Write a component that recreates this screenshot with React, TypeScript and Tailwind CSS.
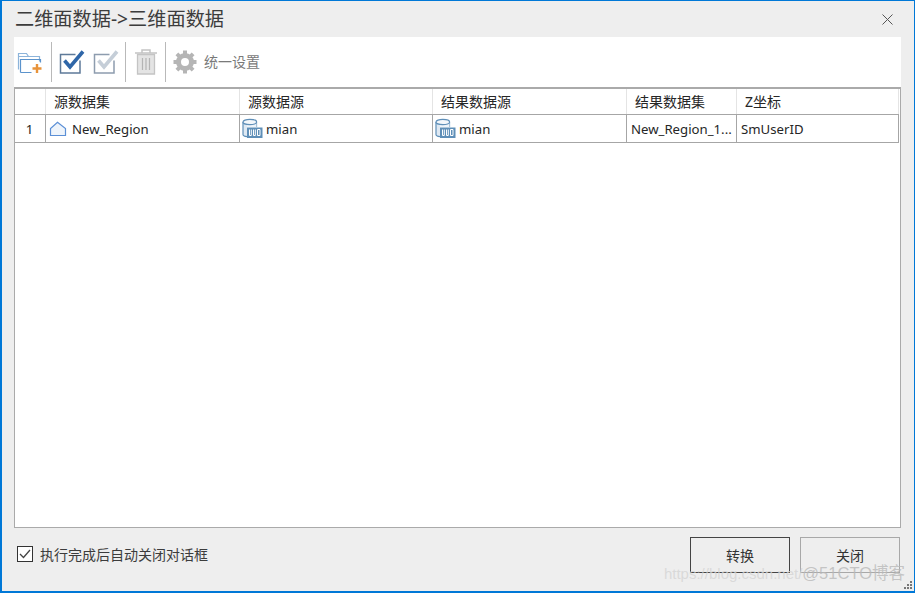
const FONT = "font-['Noto_Sans','Noto_Sans_CJK_SC',sans-serif]";

const columns = [
  { title: "源数据集", width: "w-[194px]" },
  { title: "源数据源", width: "w-[193px]" },
  { title: "结果数据源", width: "w-[194px]" },
  { title: "结果数据集", width: "w-[110px]" },
  { title: "Z坐标", width: "flex-1" },
];

function FolderAddIcon() {
  return (
    <svg width="26" height="26" viewBox="0 0 26 26" fill="none">
      <path d="M1.500 20.500V4.500h8l2 3h11v5M1.500 7.500h10" stroke="#8db4da" strokeWidth="1.200" />
      <path d="M3.500 23.500V10.500h20v3M3.500 23.500h11" stroke="#5b93cc" strokeWidth="1.200" />
      <path d="M20 15v9M15.500 19.500h9" stroke="#e8933a" strokeWidth="2.400" />
    </svg>
  );
}

function CheckBoxIcon({ frame, tick }: { frame: string; tick: string }) {
  return (
    <svg width="26" height="26" viewBox="0 0 26 26" fill="none">
      <path d="M21 11.500V24H1.500V5.500h15" stroke={frame} strokeWidth="1.500" />
      <path d="M5.500 11.500l5.500 6.500L24 2.500" stroke={tick} strokeWidth="3.600" />
    </svg>
  );
}

function TrashIcon() {
  return (
    <svg width="24" height="28" viewBox="0 0 24 28" fill="none">
      <path d="M1 5h22M8 4.500V2h8v2.500" stroke="#c4c4c4" strokeWidth="1.500" />
      <path d="M3.500 6.500h17V26h-17z" fill="#e4e4e4" stroke="#c4c4c4" strokeWidth="1.300" />
      <path d="M8.500 10v12M12 10v12M15.500 10v12" stroke="#b4b4b4" strokeWidth="1.200" />
    </svg>
  );
}

function GearIcon() {
  return (
    <svg width="24" height="24" viewBox="0 0 24 24" fill="none">
      <circle cx="12" cy="12" r="6.500" stroke="#b5b5b5" strokeWidth="5" />
      <path
        d="M12 .5v5M12 18.500v5M.5 12h5M18.500 12h5M3.900 3.900l3.500 3.500M16.600 16.600l3.500 3.500M3.900 20.100l3.500-3.500M16.600 7.400l3.500-3.500"
        stroke="#b5b5b5"
        strokeWidth="4"
      />
    </svg>
  );
}

function RegionIcon() {
  return (
    <svg width="18" height="16" viewBox="0 0 18 16" fill="none">
      <path d="M1.500 14.500V7.500L8.500 1.200 16.500 7.500v7z" fill="#eef4fb" stroke="#5b8fd6" strokeWidth="1.200" />
    </svg>
  );
}

function DatasourceIcon() {
  return (
    <svg width="21" height="21" viewBox="0 0 21 21" fill="none">
      <path d="M1 4v12.500c0 1.200 2 2 4 2.200V4z" fill="#dfe9f3" />
      <path d="M1 4v12.500c0 1.200 2 2 4 2.200M14.500 4v5" stroke="#5f8fb8" strokeWidth="1.200" />
      <path d="M5 4h9.500v5H5z" fill="#eef4fa" />
      <ellipse cx="7.800" cy="4" rx="6.800" ry="2.700" fill="#f3f7fb" stroke="#5f8fb8" strokeWidth="1.200" />
      <rect x="5" y="9.500" width="15.500" height="10.500" fill="#5f8fb8" />
      <path d="M7.500 11.500v6h1.800v-6M11.500 11.500v6h1.800v-6M15.500 11.500v6h2.500v-6z" stroke="#ffffff" strokeWidth="1" />
    </svg>
  );
}

function ToolbarDivider({ className }: { className: string }) {
  return <div className={`h-10 w-px bg-[#b9b9b9] ${className}`} />;
}

function Cell({ width, children, className = "" }: { width: string; children: React.ReactNode; className?: string }) {
  return <div className={`${width} flex h-full items-center truncate border-r border-[#a6a6a6] ${className}`}>{children}</div>;
}

export default function App() {
  return (
    <div className={`${FONT} relative flex h-[593px] w-[915px] flex-col overflow-hidden border-t border-r border-b-2 border-l-2 border-[#0078d7] bg-[#eeeeee] text-[#262626]`}>
      {/* Title bar */}
      <div className="flex h-9 shrink-0 items-center justify-between pr-[21px] pl-[13px]">
        <span className="text-[19.200px] leading-none text-[#3c3c3c]">二维面数据-&gt;三维面数据</span>
        <svg width="11" height="11" viewBox="0 0 11 11" fill="none">
          <path d="M.5.500l10 10M10.500.500l-10 10" stroke="#555555" strokeWidth="1" />
        </svg>
      </div>

      {/* Toolbar */}
      <div className="mr-[13px] ml-3 flex h-[50px] shrink-0 items-center bg-white pl-[3px]">
        <FolderAddIcon />
        <ToolbarDivider className="mr-[7px] ml-2" />
        <CheckBoxIcon frame="#5e7a99" tick="#2f66a8" />
        <div className="ml-2"><CheckBoxIcon frame="#8d9cae" tick="#c5ced8" /></div>
        <ToolbarDivider className="mr-2 ml-[6px]" />
        <TrashIcon />
        <ToolbarDivider className="mr-[7px] ml-[7px]" />
        <GearIcon />
        <span className="mb-[2px] ml-[7px] text-[14px] text-[#7a7a7a]">统一设置</span>
      </div>

      {/* Grid */}
      <div className="mr-[13px] ml-3 flex min-h-0 flex-1 flex-col border border-t-2 border-[#aaaaaa] bg-white pr-px text-[14px]">
        <div className="flex h-[26px] shrink-0 items-center border-b border-[#a6a6a6]">
          <div className="h-full w-[31px] shrink-0 border-r border-[#e4e4e4]" />
          {columns.map((col) => (
            <div key={col.title} className={`${col.width} flex h-full items-center border-r border-[#e4e4e4] pl-2`}>
              {col.title}
            </div>
          ))}
        </div>
        <div className="flex h-[28px] shrink-0 items-center border-b border-[#a6a6a6] text-[13.200px]">
          <Cell width="w-[31px] shrink-0" className="justify-center pt-[2px] pr-[1px]">1</Cell>
          <Cell width="w-[194px]" className="gap-[5px] pl-[3px]"><RegionIcon /><span className="mt-[2px]">New_Region</span></Cell>
          <Cell width="w-[193px]" className="gap-[3px] pl-[2px]"><DatasourceIcon /><span className="mt-[2px]">mian</span></Cell>
          <Cell width="w-[194px]" className="gap-[3px] pl-[2px]"><DatasourceIcon /><span className="mt-[2px]">mian</span></Cell>
          <Cell width="w-[110px]" className="pt-[2px] pl-1">New_Region_1...</Cell>
          <Cell width="flex-1" className="pt-[2px] pl-1">SmUserID</Cell>
        </div>
      </div>

      {/* Footer */}
      <div className="mr-[14px] ml-[15px] flex h-[63px] shrink-0 items-start justify-between pt-[9px]">
        <label className="flex h-9 items-center gap-[7px] pb-[2px] text-[14px] text-[#3c3c3c]">
          <span className="flex h-4 w-4 items-center justify-center border border-[#333333] bg-white">
            <svg width="12" height="10" viewBox="0 0 12 10" fill="none">
              <path d="M1 5l3.500 3.500L11 1" stroke="#444444" strokeWidth="1.300" />
            </svg>
          </span>
          执行完成后自动关闭对话框
        </label>
        <div className="flex gap-[10px] text-[14px]">
          <button className="h-9 w-[100px] border border-[#444444] bg-[#eeeeee] text-[#333333]">转换</button>
          <button className="h-9 w-[100px] border border-[#a8a8a8] bg-[#eeeeee] text-[#333333]">关闭</button>
        </div>
      </div>

      {/* Watermark */}
      <div className="pointer-events-none absolute right-[9px] bottom-[5px] flex items-baseline whitespace-nowrap font-['Liberation_Sans','Noto_Sans_CJK_SC',sans-serif] text-[#d4d4d4]/80">
        <span className="text-[15px]">https://blog.csdn.net/</span>
        <span className="text-[16.500px] text-[#b9b9b9]/80">@51CTO博客</span>
      </div>

      {/* Resize grip */}
      <svg className="absolute right-px bottom-px" width="9" height="9" viewBox="0 0 9 9" fill="#777777">
        <rect x="6" y="0" width="2" height="2" />
        <rect x="3" y="3" width="2" height="2" />
        <rect x="6" y="3" width="2" height="2" />
        <rect x="0" y="6" width="2" height="2" />
        <rect x="3" y="6" width="2" height="2" />
        <rect x="6" y="6" width="2" height="2" />
      </svg>
    </div>
  );
}
